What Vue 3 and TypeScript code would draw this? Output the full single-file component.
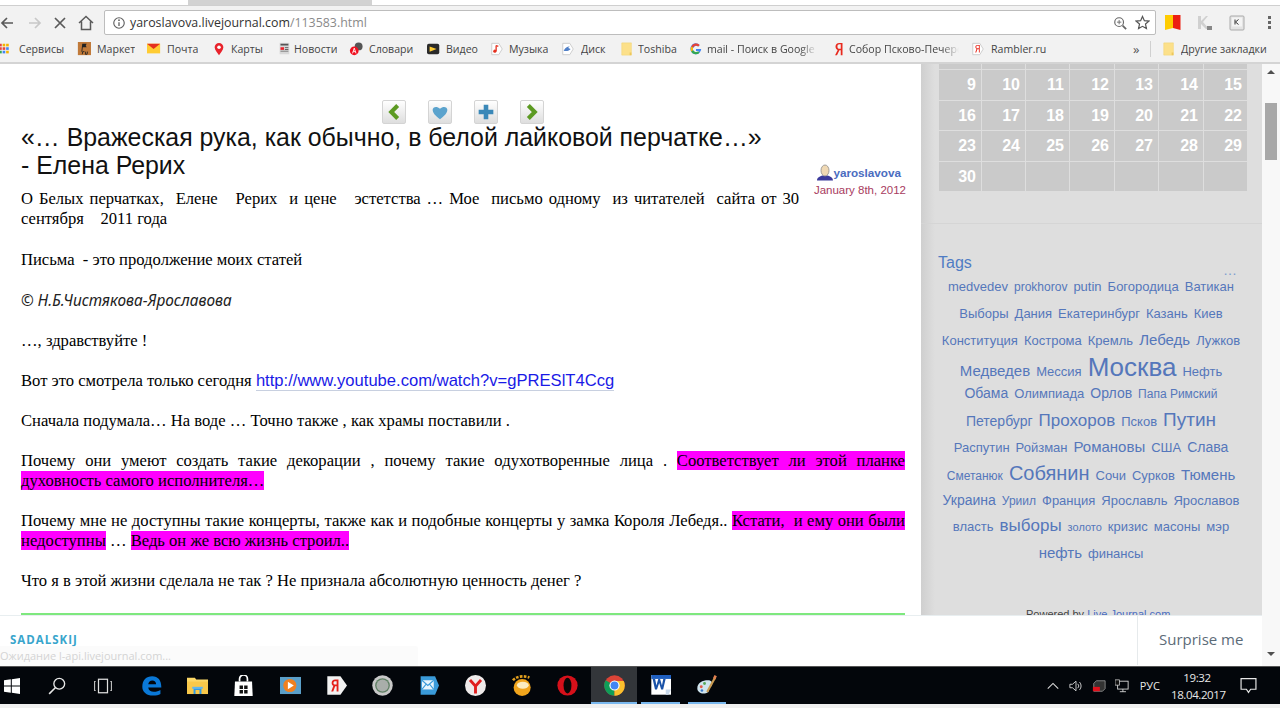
<script setup lang="ts">
const ICONS: Record<string, string> = {
  grid: '<g><rect x="-1" y="2" width="3" height="3" fill="#e8453c"/><rect x="3" y="2" width="3" height="3" fill="#f4b400"/><rect x="7" y="2" width="3" height="3" fill="#f4b400"/><rect x="-1" y="6" width="3" height="3" fill="#e8453c"/><rect x="3" y="6" width="3" height="3" fill="#e8453c"/><rect x="7" y="6" width="3" height="3" fill="#4285f4"/><rect x="-1" y="10" width="3" height="3" fill="#34a853"/><rect x="3" y="10" width="3" height="3" fill="#4285f4"/><rect x="7" y="10" width="3" height="3" fill="#f4b400"/></g>',
  market: '<rect x="1" y="0" width="15" height="15" fill="#c17a3a"/><path d="M6 2h5l-1 2 1 2H6.6L6 11H5z" fill="#222"/><path d="M6 14l.5-3h2M10 11l-.5 3h2l.5-3" stroke="#222" fill="none"/>',
  mail: '<rect x="0" y="2" width="15" height="11" fill="#fc3"/><path d="M0 2h15L7.5 8z" fill="#e5301e"/>',
  pin: '<path d="M8 1a5 5 0 0 0-5 5c0 3 3 6 5 9 2-3 5-6 5-9a5 5 0 0 0-5-5z" fill="#e8232c"/><circle cx="8" cy="6" r="2" fill="#fff"/>',
  news: '<rect x="3" y="1" width="11" height="13" fill="#d8d8d8"/><rect x="4" y="2" width="9" height="2" fill="#555"/><rect x="4" y="6" width="4" height="3" fill="#e8232c"/><rect x="9" y="6" width="4" height="1" fill="#555"/><rect x="9" y="8" width="4" height="1" fill="#555"/><rect x="4" y="10" width="9" height="1" fill="#777"/>',
  dict: '<circle cx="11" cy="5" r="4.5" fill="#555"/><circle cx="6" cy="10" r="5" fill="#f01020"/><path d="M4 13l2-6 2 6M4.8 11h2.4" stroke="#fff" fill="none"/>',
  video: '<rect x="0" y="2" width="14" height="12" rx="2" fill="#2a2a2a"/><path d="M3 5l8 3-8 3z" fill="#fc3"/>',
  music: '<path d="M2 1.5h8l4 6.5-4 6.5H2z" fill="#fff" stroke="#c8c8c8"/><path d="M7 4v6.5" stroke="#e5301e" stroke-width="1.5"/><circle cx="5.5" cy="10.5" r="1.8" fill="#e5301e"/><path d="M7 4l2.5 1" stroke="#e5301e" stroke-width="1.5"/>',
  disk: '<path d="M2 1.5h8l4 6.5-4 6.5H2z" fill="#fff" stroke="#c8c8c8"/><path d="M3 10c2-4 4-5 7-5-2 1-2 2-1 2l2 1c-1 2-5 3-8 2z" fill="#5080c8"/>',
  folder: '<path d="M2 1h11v14H2z" fill="#fce08a" stroke="#f2d272" stroke-width=".6"/><rect x="11" y="12" width="2" height="3" fill="#edc65c"/>',
  google: '<path d="M14 8H8v2.4h3.5A3.8 3.8 0 1 1 10.5 5L12.2 3.300A6.200 6.200 0 1 0 14 8z" fill="#4285f4"/><path d="M2.500 5L4.700 6.500A3.800 3.800 0 0 1 10.500 5L12.200 3.300A6.200 6.200 0 0 0 2.500 5z" fill="#ea4335"/><path d="M2.500 5a6.200 6.200 0 0 0 0 6L4.700 9.500a3.800 3.800 0 0 1 0-3z" fill="#fbbc05"/><path d="M2.500 11a6.200 6.200 0 0 0 9.600 1.300L10.500 10.500A3.800 3.800 0 0 1 4.700 9.500z" fill="#34a853"/>',
  ya: '<path d="M12 1H8.500C5.500 1 4 3 4 5c0 2 1 3.200 2.500 4L3.500 15h2.200L8.500 9.300H10V15h2zM10 7.700H8.700C7 7.700 6.200 6.500 6.200 5S7 2.600 8.700 2.600H10z" fill="#e82a1e"/>',
  rambler: '<path d="M2 1.500h8l4 6.500-4 6.500H2z" fill="#fff" stroke="#c8c8c8"/><path d="M10 3.500H7.500c-1.700 0-2.500 1-2.500 2.300 0 1 .5 1.700 1.300 2L4.800 12H6l1.300-3.800H9V12h1zM9 7.200H7.800C6.700 7.200 6.100 6.700 6.100 5.800S6.700 4.400 7.800 4.400H9z" fill="#e82a1e"/>',
  back: '<path d="M13 8H2M7 3L2 8l5 5" fill="none" stroke="#5a5a5a" stroke-width="1.700"/>',
  forward: '<path d="M3 8h11M9 3l5 5-5 5" fill="none" stroke="#c8c8c8" stroke-width="1.700"/>',
  stop: '<path d="M3 3l10 10M13 3L3 13" fill="none" stroke="#5a5a5a" stroke-width="1.700"/>',
  home: '<path d="M1 8l7-6.500L15 8M3.500 6.500V14.500h9V6.500" fill="none" stroke="#5a5a5a" stroke-width="1.500"/>',
  info: '<circle cx="8" cy="8" r="6" fill="none" stroke="#5f5f5f" stroke-width="1.300"/><path d="M8 7v4.500" stroke="#5f5f5f" stroke-width="1.500"/><circle cx="8" cy="4.800" r="1" fill="#5f5f5f"/>',
  zoom: '<circle cx="7" cy="7" r="5" fill="none" stroke="#666" stroke-width="1.300"/><path d="M11 11l4 4" stroke="#666" stroke-width="2"/><path d="M4.500 7h5M7 4.500v5" stroke="#666"/>',
  star: '<path d="M8 1.500l2 4.500 4.800.5-3.600 3.200 1 4.800L8 12.100l-4.200 2.400 1-4.800L1.200 6.500 6 6z" fill="none" stroke="#555" stroke-width="1.300"/>',
  flag: '<path d="M0 0h8v13l-8 2z" fill="#fc0"/><path d="M8 0h7.500v15L8 13z" fill="#ec2012"/>',
  kgray: '<path d="M1 1h3v5l5-5h2L6 7l6 7H9L4 9v5H1z" fill="#d0d0d0"/><rect x="10" y="11" width="5" height="4" fill="#888"/>',
  kkey: '<rect x="1" y="1" width="14" height="14" rx="1" fill="#e4e4e4" stroke="#aaa"/><rect x="3" y="2.500" width="10" height="9" fill="#f4f4f4"/><path d="M6 4.500v5M9.500 4.500L6.500 7l3 2.500" fill="none" stroke="#333"/>',
  win: '<path d="M0 2.300l6.800-1v6.200H0zM7.800 1.200L16 0v7.500H7.800zM0 8.500h6.800v6.200l-6.800-1zM7.800 8.500H16V16l-8.200-1.200z" fill="#fff"/>',
  search: '<circle cx="10" cy="6" r="4.800" fill="none" stroke="#e8e8e8" stroke-width="1.200"/><path d="M6.500 9.500L1 15" stroke="#e8e8e8" stroke-width="1.400"/>',
  taskview: '<rect x="4" y="2" width="8" height="12" fill="none" stroke="#e0e0e0" stroke-width="1.100"/><path d="M1.500 4H.5v8h1M14.500 4h1v8h-1" fill="none" stroke="#bbb"/>',
  edge: '<path d="M1 9C1 4 4 1 8.500 1 13 1 15.500 4 15.500 9.500H5.500c.3 2.300 2 3.300 4.300 3.300 2 0 3.600-.5 5-1.400v3c-1.400.8-3.200 1.300-5.500 1.300C4 15.700 1 13 1 9zm4.500-2h6c0-1.800-1.200-2.900-2.900-2.900S5.800 5.200 5.500 7z" fill="#0a78d7"/>',
  explorer: '<path d="M0 2h6l1 1.500h9V14H0z" fill="#fcd766"/><rect x="0" y="5" width="16" height="9.500" fill="#f9c84a"/><path d="M5 10h6v4.500H9.500v-3h-3v3H5z" fill="#2f9be8"/><rect x="4" y="9" width="8" height="1.500" fill="#5fb6f0"/>',
  store: '<path d="M1.500 5h13l.5 11H1z" fill="#fff"/><path d="M5 5V3a3 3 0 0 1 6 0v2" fill="none" stroke="#fff" stroke-width="1.300"/><path d="M5 8h2.600v2.600H5zM8.500 8h2.600v2.600H8.500zM5 11.500h2.600V14H5zM8.500 11.500h2.600V14H8.500z" fill="#111"/>',
  media: '<rect x="0" y="1.500" width="16" height="13" fill="#5b9fc9"/><circle cx="7.500" cy="8" r="5" fill="#f0801f"/><path d="M6 5.200L10.500 8 6 10.800z" fill="#fff"/>',
  yatag: '<path d="M1 1h10l5 7-5 7H1z" fill="#f2f2f2"/><path d="M9.500 3.500H7c-1.700 0-2.700 1.100-2.700 2.500 0 1 .5 1.800 1.300 2.200L4 12.500h1.500L7 8.500h1.100v4h1.400zM8.100 7.300H7.200C6.200 7.300 5.700 6.800 5.700 6s.5-1.300 1.500-1.300h.9z" fill="#e5201a"/>',
  orb: '<circle cx="8" cy="8" r="7.800" fill="#c8c8c8"/><circle cx="8" cy="8" r="5.600" fill="#5e7f63"/><circle cx="8" cy="8" r="4.600" fill="#a9aeaa"/>',
  mailapp: '<path d="M2 1h11l3 7-3 7H2z" fill="#3a9ad9"/><rect x="3" y="4" width="9" height="7" fill="#e8f4fb"/><path d="M3 4l4.500 4L12 4M3 11l3.200-4M12 11L8.800 7" fill="none" stroke="#3a9ad9" stroke-width=".8"/>',
  yabro: '<circle cx="8" cy="8" r="8" fill="#eeeaea"/><path d="M3.800 3.800L8 8.500l4.200-4.700M8 8.500V14" fill="none" stroke="#e01e1e" stroke-width="2.200"/>',
  fruit: '<circle cx="8.500" cy="9.500" r="6.500" fill="#f2a51c"/><ellipse cx="9" cy="7.800" rx="4.500" ry="2.600" fill="#fcecc0"/><path d="M1.500 4c3-3.500 9-3.500 12.500-2" fill="none" stroke="#e4a01e" stroke-width="2" stroke-dasharray="2 1"/>',
  opera: '<circle cx="8" cy="8" r="7.700" fill="#d5101a"/><ellipse cx="8" cy="8" rx="3" ry="6" fill="#080808"/>',
  chrome: '<circle cx="8" cy="8" r="7.800" fill="#db4437"/><path d="M8 8L1.300 4A7.800 7.800 0 0 0 8 15.800z" fill="#0f9d58"/><path d="M8 8v7.800A7.800 7.800 0 0 0 15 4.500H8z" fill="#fbc02d"/><circle cx="8" cy="8" r="3.900" fill="#fff"/><circle cx="8" cy="8" r="3" fill="#4285f4"/>',
  word: '<rect x="1" y="0" width="15" height="15" fill="#fff"/><rect x="1" y="0" width="15" height="3" fill="#1f5fc0"/><path d="M2 3l1.800 8h1.500L7 6l1.500 5H10l1.900-8h-1.800l-1 5L7.700 3H6.300L4.900 8l-1-5z" fill="#1a52a8"/><path d="M12 11h4l-2 4h-2z" fill="#c8d8ea"/>',
  palette: '<path d="M1 10C1 6 5 4 9 4c3 0 4 2 3 4-1 1.500-2 1-2 3 0 2-2 3-4 3-3 0-5-1.500-5-4z" fill="#cfe4ee"/><circle cx="4" cy="9" r="1.100" fill="#e05a48"/><circle cx="6.500" cy="6.500" r="1.100" fill="#58a858"/><circle cx="4.500" cy="11.800" r="1" fill="#3a78c8"/><path d="M8.500 13L14.500 2" stroke="#c99a50" stroke-width="1.600"/><path d="M13.800 3L15 .5" stroke="#e08050" stroke-width="2"/>',
  caret: '<path d="M2 11l6-6 6 6" fill="none" stroke="#ddd" stroke-width="1.200"/>',
  speaker: '<path d="M1 6h3l4-3.500v11L4 10H1z" fill="none" stroke="#ddd"/><path d="M10 5.500a3.500 3.500 0 0 1 0 5M12 3.500a6.500 6.500 0 0 1 0 9" fill="none" stroke="#ddd"/>',
  device: '<path d="M2 5l3-3h10v9l-3 3H2z" fill="#333" stroke="#aaa" stroke-width=".8"/><rect x="1" y="9" width="8" height="5" fill="#e0101c"/>',
  network: '<rect x="3" y="2.500" width="12" height="9" fill="none" stroke="#ddd"/><path d="M9 11.500v3M5.500 14.500h7" stroke="#ddd"/><rect x="0" y="1" width="5" height="6" fill="#111" stroke="#ddd" stroke-width=".8"/>',
  notify: '<path d="M1 1.500h14v10h-5l-2 3-2-3H1z" fill="none" stroke="#e8e8e8" stroke-width="1.100"/>',
}

interface Bookmark { icon: string; label: string; width: number; gap: number; fade?: boolean }

const BOOKMARKS: Bookmark[] = [
  { icon: 'grid', label: 'Сервисы', width: 77, gap: 5 },
  { icon: 'market', label: 'Маркет', width: 70, gap: 6 },
  { icon: 'mail', label: 'Почта', width: 65, gap: 6 },
  { icon: 'pin', label: 'Карты', width: 65, gap: 5 },
  { icon: 'news', label: 'Новости', width: 72, gap: 3 },
  { icon: 'dict', label: 'Словари', width: 78, gap: 6 },
  { icon: 'video', label: 'Видео', width: 63, gap: 5 },
  { icon: 'music', label: 'Музыка', width: 71, gap: 5 },
  { icon: 'disk', label: 'Диск', width: 59, gap: 6 },
  { icon: 'folder', label: 'Toshiba', width: 69, gap: 4 },
  { icon: 'google', label: 'mail - Поиск в Google', width: 143, gap: 4, fade: true },
  { icon: 'ya', label: 'Собор Псково-Печерский', width: 139, gap: 3, fade: true },
  { icon: 'rambler', label: 'Rambler.ru', width: 162, gap: 6 },
]

const CAL_ROWS = [
  ['9', '10', '11', '12', '13', '14', '15'],
  ['16', '17', '18', '19', '20', '21', '22'],
  ['23', '24', '25', '26', '27', '28', '29'],
  ['30', '', '', '', '', '', ''],
]

const TAGS: { t: string; s: number }[][] = [
  [{ t: 'medvedev', s: 13 }, { t: 'prokhorov', s: 12 }, { t: 'putin', s: 13 }, { t: 'Богородица', s: 13 }, { t: 'Ватикан', s: 13 }],
  [{ t: 'Выборы', s: 13 }, { t: 'Дания', s: 13 }, { t: 'Екатеринбург', s: 13 }, { t: 'Казань', s: 13 }, { t: 'Киев', s: 13 }],
  [{ t: 'Конституция', s: 13 }, { t: 'Кострома', s: 13 }, { t: 'Кремль', s: 13 }, { t: 'Лебедь', s: 15 }, { t: 'Лужков', s: 13 }],
  [{ t: 'Медведев', s: 15 }, { t: 'Мессия', s: 13 }, { t: 'Москва', s: 26 }, { t: 'Нефть', s: 13 }],
  [{ t: 'Обама', s: 14 }, { t: 'Олимпиада', s: 13 }, { t: 'Орлов', s: 14 }, { t: 'Папа Римский', s: 12 }],
  [{ t: 'Петербург', s: 14 }, { t: 'Прохоров', s: 17 }, { t: 'Псков', s: 13 }, { t: 'Путин', s: 19 }],
  [{ t: 'Распутин', s: 13 }, { t: 'Ройзман', s: 13 }, { t: 'Романовы', s: 15 }, { t: 'США', s: 13 }, { t: 'Слава', s: 14 }],
  [{ t: 'Сметанюк', s: 12 }, { t: 'Собянин', s: 20 }, { t: 'Сочи', s: 13 }, { t: 'Сурков', s: 13 }, { t: 'Тюмень', s: 15 }],
  [{ t: 'Украина', s: 14 }, { t: 'Уриил', s: 12 }, { t: 'Франция', s: 13 }, { t: 'Ярославль', s: 13 }, { t: 'Ярославов', s: 13 }],
  [{ t: 'власть', s: 13 }, { t: 'выборы', s: 17 }, { t: 'золото', s: 11 }, { t: 'кризис', s: 13 }, { t: 'масоны', s: 13 }, { t: 'мэр', s: 13 }],
  [{ t: 'нефть', s: 15 }, { t: 'финансы', s: 13 }],
]

const TASK_APPS = [
  { icon: 'edge' }, { icon: 'explorer' }, { icon: 'store' }, { icon: 'media' },
  { icon: 'yatag' }, { icon: 'orb' }, { icon: 'mailapp' }, { icon: 'yabro' },
  { icon: 'fruit' }, { icon: 'opera' }, { icon: 'chrome', active: true },
  { icon: 'word', open: true }, { icon: 'palette', open: true },
]
</script>

<template>
  <div class="screen">
    <header class="browser">
      <div class="tabstrip"><div class="tab"></div></div>
      <div class="toolbar">
        <svg class="tool-btn" viewBox="0 0 16 16" v-html="ICONS.back"></svg>
        <svg class="tool-btn" viewBox="0 0 16 16" v-html="ICONS.forward"></svg>
        <svg class="tool-btn" viewBox="0 0 16 16" v-html="ICONS.stop"></svg>
        <svg class="tool-btn" viewBox="0 0 16 16" v-html="ICONS.home"></svg>
        <div class="omnibox">
          <svg class="omni-ico" viewBox="0 0 16 16" v-html="ICONS.info"></svg>
          <span class="url">yaroslavova.livejournal.com<span class="url-path">/113583.html</span></span>
          <svg class="omni-zoom" viewBox="0 0 16 16" v-html="ICONS.zoom"></svg>
          <svg class="omni-star" viewBox="0 0 16 16" v-html="ICONS.star"></svg>
        </div>
        <svg class="ext" viewBox="0 0 16 16" v-html="ICONS.flag"></svg>
        <svg class="ext" viewBox="0 0 16 16" v-html="ICONS.kgray"></svg>
        <svg class="ext" viewBox="0 0 16 16" v-html="ICONS.kkey"></svg>
        <div class="dots"><i></i><i></i><i></i></div>
      </div>
      <div class="bookmarks">
        <div v-for="b in BOOKMARKS" :key="b.label" class="bm" :style="{ width: b.width + 'px', gap: b.gap + 'px' }">
          <svg class="bm-ico" viewBox="0 0 16 16" v-html="ICONS[b.icon]"></svg>
          <span class="bm-label" :class="{ fade: b.fade }">{{ b.label }}</span>
        </div>
        <span class="bm-more">»</span>
        <span class="bm-sep"></span>
        <div class="bm other">
          <svg class="bm-ico" viewBox="0 0 16 16" v-html="ICONS.folder"></svg>
          <span class="bm-label">Другие закладки</span>
        </div>
      </div>
    </header>

    <main class="viewport">
      <article class="post">
        <div class="post-nav">
          <span class="nav-btn"><svg viewBox="0 0 24 24"><path d="M16 5l-7 7 7 7" fill="none" stroke="#5c9a22" stroke-width="4.500"/></svg></span>
          <span class="nav-btn"><svg viewBox="0 0 24 24"><path d="M12 20C7 16 4 13 4 9.500 4 6.500 8.500 5 12 8.500 15.500 5 20 6.500 20 9.500c0 3.500-3 6.500-8 10.500z" fill="#5ba3cd"/></svg></span>
          <span class="nav-btn"><svg viewBox="0 0 24 24"><path d="M9.500 4h5v5.500H20v5h-5.500V20h-5v-5.500H4v-5h5.500z" fill="#3a88b8"/></svg></span>
          <span class="nav-btn"><svg viewBox="0 0 24 24"><path d="M8 5l7 7-7 7" fill="none" stroke="#5c9a22" stroke-width="4.500"/></svg></span>
        </div>
        <h1 class="post-title">«… Вражеская рука, как обычно, в белой лайковой перчатке…»<br>- Елена Рерих</h1>
        <div class="author">
          <div class="author-name">
            <svg class="avatar" viewBox="0 0 16 16"><path d="M0 16c0-3 3-4 5-5h6c2 1 5 2 5 5z" fill="#3b3a9c"/><ellipse cx="8" cy="6" rx="4" ry="5.500" fill="#f0d9b4" stroke="#8a8a8a" stroke-width=".8"/></svg>
            <b>yaroslavova</b>
          </div>
          <div class="author-date">January 8th, 2012</div>
        </div>
        <div class="post-body">
          <p class="first">О Белых перчатках,&nbsp; Елене&nbsp;&nbsp; Рерих&nbsp; и цене&nbsp;&nbsp; эстетства … Мое&nbsp; письмо одному&nbsp; из читателей&nbsp; сайта от 30 сентября&nbsp;&nbsp;&nbsp; 2011 года</p>
          <p class="first">Письма&nbsp; - это продолжение моих статей</p>
          <p class="sign">© Н.Б.Чистякова-Ярославова</p>
          <p>…, здравствуйте !</p>
          <p>Вот это смотрела только сегодня <a class="link">http://www.youtube.com/watch?v=gPRESlT4Ccg</a></p>
          <p>Сначала подумала… На воде … Точно также , как храмы поставили .</p>
          <p>Почему они умеют создать такие декорации , почему такие одухотворенные лица . <mark>Соответствует ли этой планке духовность&nbsp;самого исполнителя…</mark></p>
          <p>Почему мне не доступны такие концерты, также как и подобные концерты у замка Короля Лебедя.. <mark>Кстати,&nbsp; и ему они были недоступны</mark> … <mark>Ведь он же всю жизнь строил..</mark></p>
          <p>Что я в этой жизни сделала не так ? Не признала абсолютную ценность денег ?</p>
          <hr class="green">
        </div>
      </article>

      <aside class="sidebar">
        <div class="calendar">
          <div class="cal-row cal-stub"><span v-for="n in 7" :key="n"></span></div>
          <div v-for="(row, i) in CAL_ROWS" :key="i" class="cal-row">
            <span v-for="(d, j) in row" :key="j">{{ d }}</span>
          </div>
        </div>
        <div class="side-line"></div>
        <h3 class="tags-title">Tags</h3>
        <div class="tags-more">…</div>
        <div class="tags">
          <div v-for="(row, i) in TAGS" :key="i" class="tag-row">
            <span v-for="tag in row" :key="tag.t" :style="{ fontSize: tag.s + 'px' }">{{ tag.t }}</span>
          </div>
        </div>
        <div class="powered">Powered by <span>Live Journal.com</span></div>
      </aside>

      <div class="scrollbar">
        <span class="arrow up"></span>
        <div class="thumb"></div>
        <span class="arrow down"></span>
      </div>

      <div class="promo">
        <div class="promo-name">SADALSKIJ</div>
        <div class="promo-btn">Surprise me</div>
      </div>
      <div class="status">Ожидание l-api.livejournal.com...</div>
    </main>

    <footer class="taskbar">
      <svg class="tb-win" viewBox="0 0 16 16" v-html="ICONS.win"></svg>
      <div class="tb-fixed tb-search"><svg viewBox="0 0 16 16" v-html="ICONS.search"></svg></div>
      <div class="tb-fixed tb-view"><svg viewBox="0 0 16 16" v-html="ICONS.taskview"></svg></div>
      <div class="tb-apps">
        <div v-for="a in TASK_APPS" :key="a.icon" class="tb-app" :class="{ active: a.active, open: a.open }">
          <svg viewBox="0 0 16 16" v-html="ICONS[a.icon]"></svg>
        </div>
      </div>
      <div class="tray">
        <svg viewBox="0 0 16 16" v-html="ICONS.caret"></svg>
        <svg viewBox="0 0 16 16" v-html="ICONS.speaker"></svg>
        <svg viewBox="0 0 16 16" v-html="ICONS.device"></svg>
        <svg viewBox="0 0 16 16" v-html="ICONS.network"></svg>
        <span class="lang">РУС</span>
        <div class="clock"><div>19:32</div><div>18.04.2017</div></div>
        <svg class="notify" viewBox="0 0 16 16" v-html="ICONS.notify"></svg>
      </div>
    </footer>
    <div class="under"></div>
  </div>
</template>

<style>
html, body { margin: 0; overflow: hidden; }
</style>

<style scoped>
.screen { width: 1280px; height: 708px; display: flex; flex-direction: column; overflow: hidden; background: #fff; font-family: 'Liberation Sans', Arial, sans-serif; }

.browser { flex: none; height: 64px; background: #f2f2f2; border-bottom: 2px solid #d4d4d4; box-sizing: border-box; }
.tabstrip { height: 5px; background: #fff; border-bottom: 1px solid #cfcfcf; }
.tab { margin-left: 188px; width: 184px; height: 5px; background: #d2d2d2; }

.toolbar { height: 31px; display: flex; align-items: center; position: relative; padding-top: 2px; box-sizing: border-box; }
.tool-btn { width: 16px; height: 16px; margin-left: -1px; margin-right: 11px; flex: none; }
.tool-btn:first-child { margin-left: 0; }
.omnibox { margin-left: -1px; width: 1052px; height: 25px; background: #fff; border: 1px solid #bdbdbd; border-radius: 2px; box-sizing: border-box; display: flex; align-items: center; padding: 0 5px 0 7px; }
.omni-ico { width: 14px; height: 14px; margin-right: 4px; }
.url { font: 12.400px 'Open Sans', sans-serif; color: #333; flex: 1; margin-bottom: 1px; }
.url-path { color: #8a8a8a; }
.omni-zoom { width: 14px; height: 14px; margin-right: 8px; }
.omni-star { width: 15px; height: 15px; }
.ext { width: 16px; height: 16px; margin-left: 16px; flex: none; }
.ext:nth-of-type(5) { margin-left: 9px; }
.dots { margin-left: 23px; display: flex; flex-direction: column; gap: 2px; }
.dots i { width: 3px; height: 3px; background: #666; display: block; }

.bookmarks { height: 24px; display: flex; align-items: center; font: 10.600px 'Open Sans', sans-serif; color: #444; }
.bm { display: flex; align-items: center; flex: none; box-sizing: border-box; }
.bm.other { gap: 5px; }
.bm-ico { width: 14px; height: 14px; flex: none; }
.bm-label { white-space: nowrap; overflow: hidden; }
.bm-label.fade { width: 110px; -webkit-mask-image: linear-gradient(90deg, #000 85%, transparent); mask-image: linear-gradient(90deg, #000 85%, transparent); }
.bm-more { width: 17px; font-size: 13px; margin-left: 0; color: #555; }
.bm-sep { width: 1px; height: 16px; background: #d0d0d0; margin-right: 11px; }

.viewport { flex: none; height: 602px; position: relative; display: flex; overflow: hidden; }

.post { width: 921px; flex: none; box-sizing: border-box; padding: 36px 16px 0 21px; }
.post-nav { display: flex; justify-content: center; gap: 22px; height: 24px; }
.nav-btn { width: 24px; height: 24px; box-sizing: border-box; border: 1px solid #d4d4d4; border-radius: 2px; background: linear-gradient(#fff, #dedede); display: block; }
.nav-btn svg { width: 22px; height: 22px; display: block; }
.post-title { margin: 0; font-size: 24.900px; line-height: 27.500px; font-weight: 400; color: #111; }
.author { float: right; width: 106px; margin-top: -15px; text-align: right; font-size: 11.700px; }
.author-name { display: flex; align-items: center; justify-content: flex-end; padding-right: 4px; color: #4a6cc0; }
.avatar { width: 16px; height: 17px; }
.author-date { color: #a83c60; margin-top: 3px; white-space: nowrap; font-size: 11.500px; margin-right: -1px; }
.post-body { padding-top: 10px; font: 16.600px/20px 'Liberation Serif', 'Times New Roman', serif; color: #000; }
.post-body p { margin: 0 0 20px; text-align: justify; }
.post-body p.first { margin-bottom: 21px; }
.post-body .sign { font: italic 15.400px/20px 'Noto Sans', sans-serif; color: #222; }
.link { font: 16.600px/20px 'Liberation Sans', sans-serif; color: #1a1ae6; border-bottom: 1px solid #c8d0e0; }
mark { background: #ff00ff; color: #000; }
.green { height: 2px; border: 0; margin: 22px 0 0; background: #7ee87e; }

.sidebar { width: 341px; flex: none; background: linear-gradient(90deg, #cfcfcf, #dedede 14px); box-sizing: border-box; padding: 0 15px 0 18px; position: relative; }
.calendar { display: flex; flex-direction: column; gap: 1px; width: 308px; }
.cal-row { display: grid; grid-template-columns: 42px 43px 43px 44px 43px 44px 43px; gap: 1px; height: 29.500px; }
.cal-row span { background: #cacaca; color: #fff; font-size: 16px; font-weight: 700; line-height: 29px; text-align: right; padding-right: 5px; }
.cal-stub { height: 5px; }
.side-line { height: 1px; background: #d5d5d5; margin: 32px -15px 0 -18px; }
.tags-title { margin: 30px 0 0 -1px; font-size: 16px; line-height: 18px; font-weight: 400; color: #4f7cc4; }
.tags-more { height: 0; text-align: right; color: #7d9ccf; font-size: 14px; line-height: 8px; padding-right: 10px; margin-top: -6px; }
.tags { margin-top: 8px; color: #5577bb; margin-left: -12px; margin-right: -8px; }
.tag-row { display: flex; justify-content: center; align-items: baseline; height: 26.600px; line-height: 26px; white-space: nowrap; gap: 6px; }
.powered { position: absolute; left: 105px; top: 544px; font-size: 11px; color: #444; }
.powered span { color: #4a6cc0; }

.scrollbar { width: 18px; flex: none; background: #f8f8f8; display: flex; flex-direction: column; align-items: center; }
.arrow { width: 0; height: 0; border: 4px solid transparent; }
.arrow.up { border-bottom: 4px solid #505050; border-top: 0; margin-top: 6px; }
.thumb { width: 12px; height: 57px; background: #a8a8a8; margin-top: 29px; margin-left: 0; }
.arrow.down { border-top: 4px solid #505050; border-bottom: 0; margin-top: 492px; }

.promo { position: absolute; left: 0; right: 18px; bottom: 0; height: 51px; background: #fff; border-top: 1px solid #e8eef0; box-sizing: border-box; display: flex; align-items: center; justify-content: space-between; }
.promo-name { margin-left: 10px; font: 700 11.500px 'Open Sans', sans-serif; letter-spacing: 1px; color: #38a5cc; margin-bottom: 3px; }
.promo-btn { height: 100%; border-left: 1px solid #e6eaec; padding-left: 21px; width: 103px; font: 15px/49px 'Open Sans', sans-serif; color: #5c6b78; white-space: nowrap; margin-top: -3px; }
.status { position: absolute; left: 0; bottom: 0; width: 418px; height: 20px; background: rgba(250, 250, 250, .85); font: 11px/20px 'Open Sans', sans-serif; color: #d4d4d4; box-sizing: border-box; border-radius: 0 3px 0 0; white-space: nowrap; }

.taskbar { flex: none; height: 38px; background: #03060b; border-top: 1px solid #555; box-sizing: border-box; display: flex; align-items: center; color: #e8e8e8; }
.taskbar svg { display: block; }
.tb-win { width: 16px; height: 16px; margin-left: 4px; flex: none; }
.tb-fixed { flex: none; display: flex; justify-content: center; }
.tb-fixed svg { width: 18px; height: 18px; }
.tb-search { width: 66px; margin-left: 4px; }
.tb-view { width: 26px; }
.tb-apps { margin-left: 12px; display: flex; height: 100%; flex: none; }
.tb-app { width: 46.300px; height: 100%; display: flex; align-items: center; justify-content: center; box-sizing: border-box; position: relative; }
.tb-app svg { width: 21px; height: 21px; }
.tb-app.active { background: #33363a; }
.tb-app.active::after, .tb-app.open::after { content: ''; position: absolute; left: 4px; right: 4px; bottom: 0; height: 2px; background: #7ab8ee; }
.tb-app.active::after { left: 0; right: 0; }
.tray { margin-left: auto; display: flex; align-items: center; height: 100%; padding-right: 23px; font: 11px 'Open Sans', sans-serif; }
.tray svg { width: 14px; height: 14px; margin-left: 9px; }
.lang { margin-left: 11px; font-size: 11px; }
.clock { margin-left: 11px; text-align: center; line-height: 17px; font-size: 11.500px; width: 52px; letter-spacing: -.4px; }
.tray .notify { width: 17px; height: 17px; margin-left: 17px; }
.under { flex: none; height: 4px; background: #f0f0f0; }
</style>
